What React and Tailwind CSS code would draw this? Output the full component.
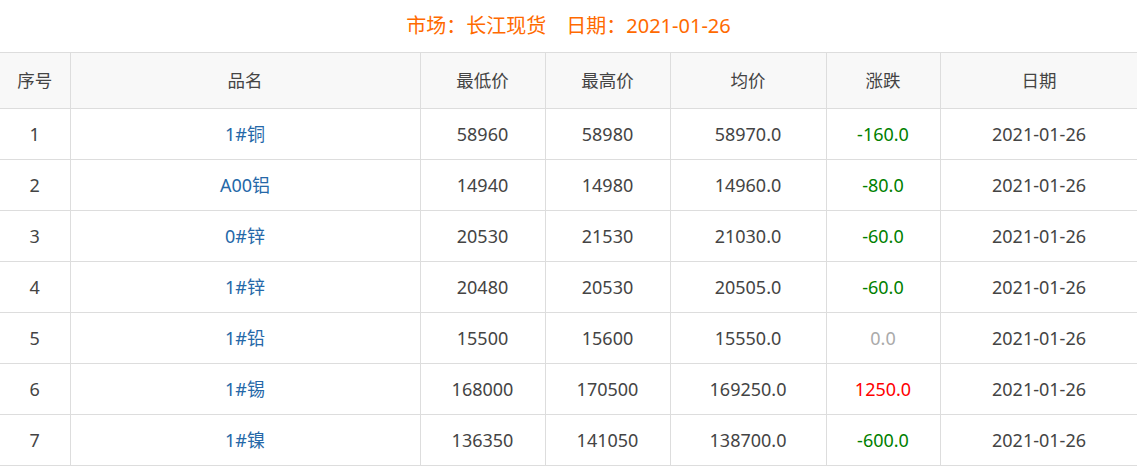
import React from "react";

const rows = [
  ["1", "1#铜", "58960", "58980", "58970.0", "-160.0", "2021-01-26"],
  ["2", "A00铝", "14940", "14980", "14960.0", "-80.0", "2021-01-26"],
  ["3", "0#锌", "20530", "21530", "21030.0", "-60.0", "2021-01-26"],
  ["4", "1#锌", "20480", "20530", "20505.0", "-60.0", "2021-01-26"],
  ["5", "1#铅", "15500", "15600", "15550.0", "0.0", "2021-01-26"],
  ["6", "1#锡", "168000", "170500", "169250.0", "1250.0", "2021-01-26"],
  ["7", "1#镍", "136350", "141050", "138700.0", "-600.0", "2021-01-26"],
];

function changeColor(v) {
  const n = parseFloat(v);
  if (n < 0) return "text-[#008000]";
  if (n > 0) return "text-[#ff0000]";
  return "text-[#aaaaaa]";
}

export default function App() {
  const font = { fontFamily: '"Noto Sans", "Noto Sans CJK SC", sans-serif' };
  const cell = "border border-[#dddddd] text-center align-middle p-0";
  return (
    <div className="w-[1137px] bg-white text-[#444444]" style={font}>
      <div className="h-[52px] flex items-center justify-center text-[20px] text-[#ff6a00]">
        <span>市场：长江现货</span>
        <span className="ml-[20px]">日期：2021-01-26</span>
      </div>
      <table className="w-[1138px] table-fixed border-collapse text-[18px]">
        <colgroup>
          <col className="w-[70px]" />
          <col className="w-[350px]" />
          <col className="w-[125px]" />
          <col className="w-[125px]" />
          <col className="w-[156px]" />
          <col className="w-[114px]" />
          <col className="w-[198px]" />
        </colgroup>
        <thead>
          <tr className="h-[56px] bg-[#f8f8f8] text-[17.5px]">
            {["序号", "品名", "最低价", "最高价", "均价", "涨跌", "日期"].map((h, i) => (
              <th key={h} className={`${cell} font-normal ${i === 0 ? "border-l-0" : ""}`}>
                {h}
              </th>
            ))}
          </tr>
        </thead>
        <tbody>
          {rows.map((r) => (
            <tr key={r[0]} className="h-[51px]">
              <td className={`${cell} border-l-0`}>{r[0]}</td>
              <td className={`${cell} text-[#2568a8]`}>{r[1]}</td>
              <td className={cell}>{r[2]}</td>
              <td className={cell}>{r[3]}</td>
              <td className={cell}>{r[4]}</td>
              <td className={`${cell} ${changeColor(r[5])}`}>{r[5]}</td>
              <td className={cell}>{r[6]}</td>
            </tr>
          ))}
        </tbody>
      </table>
    </div>
  );
}
